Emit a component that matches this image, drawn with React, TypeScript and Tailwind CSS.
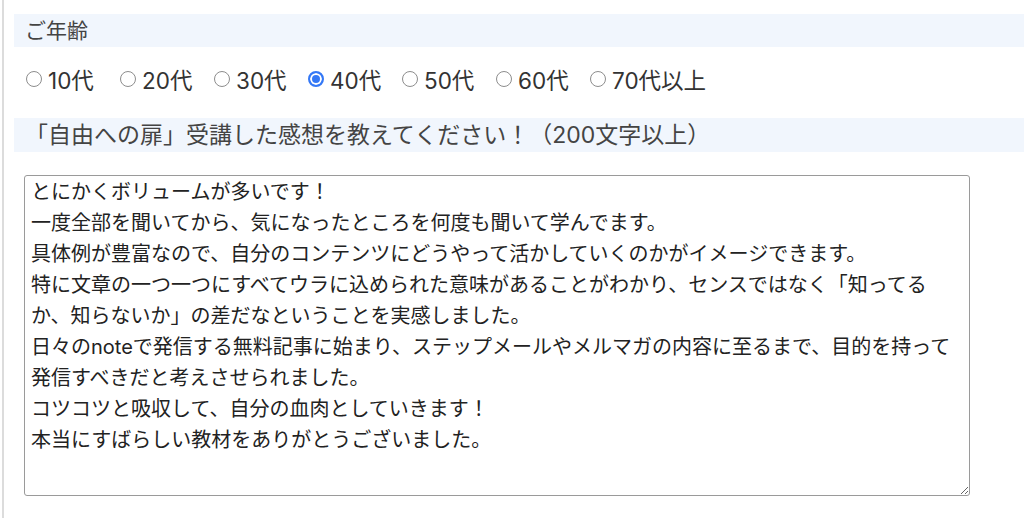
import { useState } from 'react';

const ages = ['10代', '20代', '30代', '40代', '50代', '60代', '70代以上'];

const impression = `とにかくボリュームが多いです！
一度全部を聞いてから、気になったところを何度も聞いて学んでます。
具体例が豊富なので、自分のコンテンツにどうやって活かしていくのかがイメージできます。
特に文章の一つ一つにすべてウラに込められた意味があることがわかり、センスではなく「知ってるか、知らないか」の差だなということを実感しました。
日々のnoteで発信する無料記事に始まり、ステップメールやメルマガの内容に至るまで、目的を持って発信すべきだと考えさせられました。
コツコツと吸収して、自分の血肉としていきます！
本当にすばらしい教材をありがとうございました。`;

const font = 'Inter, "Noto Sans CJK JP", sans-serif';

export default function App() {
  const [age, setAge] = useState('40代');
  const [text, setText] = useState(impression);

  return (
    <div
      className="min-h-[518px] bg-white ml-[2px] border-l-2 border-[#dcdcdc] pl-[10px] pt-[14px] text-[#333]"
      style={{ fontFamily: font }}
    >
      {/* ご年齢 */}
      <div className="h-[33px] bg-[#f1f6fd] pl-[11px] flex items-center text-[21px] text-[#444]">
        ご年齢
      </div>

      <div className="mt-[20px] h-[28px] pl-[11px] flex items-center text-[22.5px] text-[#333]">
        {ages.map((a) => (
          <label key={a} className="w-[94px] shrink-0 flex items-center gap-[6px] cursor-pointer">
            <input
              type="radio"
              name="age"
              checked={age === a}
              onChange={() => setAge(a)}
              className="appearance-none shrink-0 size-[16px] m-0 ml-[1px] -mt-[4px] rounded-full border border-[#8d8d8d] bg-white checked:border-[2px] checked:border-[#3478f6] checked:bg-[#3478f6] checked:shadow-[inset_0_0_0_2px_#fff]"
            />
            <span className="whitespace-nowrap">{a}</span>
          </label>
        ))}
      </div>

      {/* 感想 */}
      <div className="mt-[23px] h-[34px] bg-[#f1f6fd] pl-[11px] flex items-center text-[23px] text-[#444] whitespace-nowrap">
        「自由への扉」受講した感想を教えてください！（200文字以上）
      </div>

      <div className="mt-[23px] pl-[10px]">
        <textarea
          value={text}
          onChange={(e) => setText(e.target.value)}
          className="block w-[946px] h-[321px] border border-[#9a9a9a] rounded-[3px] px-[6px] pt-[1px] text-[20px] leading-[31px] text-[#222] outline-none"
          style={{ fontFamily: font }}
        />
      </div>
    </div>
  );
}
